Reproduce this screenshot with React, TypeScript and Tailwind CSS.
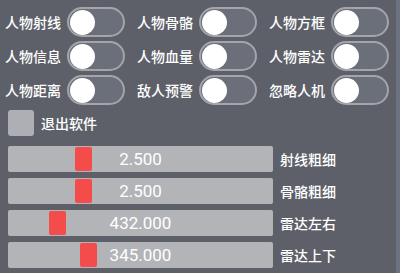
const toggles = [
  ['人物射线', '人物骨骼', '人物方框'],
  ['人物信息', '人物血量', '人物雷达'],
  ['人物距离', '敌人预警', '忽略人机'],
];

const sliders = [
  { value: '2.500', label: '射线粗细', pos: 67 },
  { value: '2.500', label: '骨骼粗细', pos: 67 },
  { value: '432.000', label: '雷达左右', pos: 41 },
  { value: '345.000', label: '雷达上下', pos: 72 },
];

function Toggle() {
  return (
    <div className="w-[58px] h-[30px] rounded-full border-2 border-[#a3a5ab] bg-[#6b6f7a] flex items-center pl-[1px]">
      <div className="w-[25px] h-[25px] rounded-full bg-white" />
    </div>
  );
}

export default function App() {
  return (
    <div
      className="w-[400px] h-[273px] bg-[#5d6068] flex overflow-hidden text-white"
      style={{ fontFamily: '"Noto Sans CJK SC", "Noto Sans", sans-serif' }}
    >
      <div className="w-[396px] flex flex-col pt-[7px]">
        <div className="flex flex-col gap-[4px]">
          {toggles.map((row, i) => (
            <div key={i} className="flex">
              {row.map((t) => (
                <div key={t} className="w-[133px] flex items-center gap-[6px] pl-[5px]">
                  <span className="w-[56px] text-[14px] leading-none font-medium whitespace-nowrap">{t}</span>
                  <Toggle />
                </div>
              ))}
            </div>
          ))}
        </div>
        <div className="flex items-center gap-[7px] pl-[8px] mt-[5px] h-[26px]">
          <div className="w-[26px] h-[26px] rounded-[3px] bg-[#aeafb4]" />
          <span className="text-[14px] leading-none font-medium">退出软件</span>
        </div>
        <div className="flex flex-col gap-[6px] mt-[10px] pl-[8px]">
          {sliders.map((s, i) => (
            <div key={i} className="flex items-center gap-[7px]">
              <div className="relative w-[265px] h-[26px] rounded-[2px] bg-[#b3b4b8] flex items-center justify-center">
                <div
                  className="absolute top-[1px] w-[17px] h-[24px] rounded-[2px] bg-[#f44b4b]"
                  style={{ left: s.pos }}
                />
                <span
                  className="relative text-[17px] leading-none"
                  style={{ fontFamily: 'Roboto, "Liberation Sans", sans-serif' }}
                >
                  {s.value}
                </span>
              </div>
              <span className="text-[14px] leading-none font-medium">{s.label}</span>
            </div>
          ))}
        </div>
      </div>
      <div className="w-[4px] h-full bg-[#6c7382]" />
    </div>
  );
}
